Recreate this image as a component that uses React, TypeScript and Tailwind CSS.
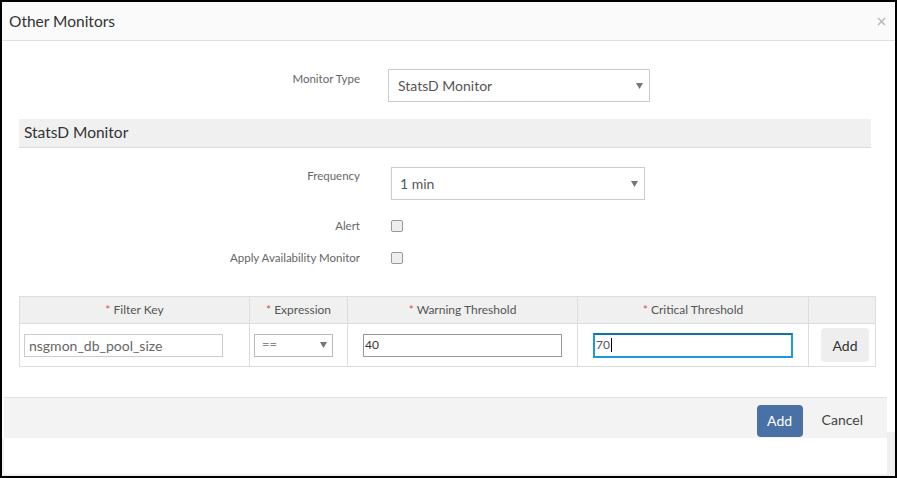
import React from "react";

const font = { fontFamily: "Lato, 'Noto Sans', sans-serif" };

function Caret() {
  return (
    <svg width="7" height="6" viewBox="0 0 7 6" className="shrink-0">
      <path d="M0 0 H7 L3.5 6 Z" fill="#777" />
    </svg>
  );
}

function Req({ children }: { children: React.ReactNode }) {
  return (
    <span>
      <span className="text-[#d9534f]">*</span> {children}
    </span>
  );
}

export default function App() {
  return (
    <div
      className="w-[897px] h-[478px] border-2 border-black bg-[#f0f0f0] flex flex-col overflow-hidden"
      style={font}
    >
      {/* modal */}
      <div className="bg-white h-[395px] flex flex-col shrink-0">
        <div className="h-[39px] bg-[#fafafa] border-b border-[#e0e0e0] flex items-center justify-between pl-[7px] pr-[9px] shrink-0">
          <span className="text-[15.5px] text-[#333] leading-none mt-[2px]">Other Monitors</span>
          <svg width="9" height="9" viewBox="0 0 9 9" className="mt-[1px]">
            <path d="M1 1 L8 8 M8 1 L1 8" stroke="#bbb" strokeWidth="1.6" />
          </svg>
        </div>
        <div className="flex flex-col">
          {/* Monitor Type */}
          <div className="flex mt-[28px]">
            <div className="w-[358px] text-right text-[11.5px] text-[#666] pt-[2px] leading-4">Monitor Type</div>
            <div className="ml-[28px] w-[262px] h-[33px] border border-[#ccc] flex items-center justify-between pl-[9px] pr-[6px]">
              <span className="text-[14px] text-[#555]">StatsD Monitor</span>
              <Caret />
            </div>
          </div>
          {/* Section */}
          <div className="mt-[17px] ml-[17px] w-[852px] h-[29px] bg-[#f0f0f0] border-b border-[#ddd] flex items-center pl-[5px]">
            <span className="text-[15.5px] text-[#333]">StatsD Monitor</span>
          </div>
          {/* Frequency */}
          <div className="flex mt-[19px]">
            <div className="w-[358px] text-right text-[11.5px] text-[#666] pt-[1px] leading-4">Frequency</div>
            <div className="ml-[31px] w-[254px] h-[33px] border border-[#ccc] flex items-center justify-between pl-[8px] pr-[6px]">
              <span className="text-[14px] text-[#555]">1 min</span>
              <Caret />
            </div>
          </div>
          {/* Alert */}
          <div className="flex items-center mt-[20px] h-[12px]">
            <div className="w-[358px] text-right text-[11.5px] text-[#666] leading-4">Alert</div>
            <div className="ml-[31px] w-[12px] h-[12px] rounded-[2px] border border-[#999] bg-[#eee]" />
          </div>
          <div className="flex items-center mt-[20px] h-[12px]">
            <div className="w-[358px] text-right text-[11.5px] text-[#666] leading-4">Apply Availability Monitor</div>
            <div className="ml-[31px] w-[12px] h-[12px] rounded-[2px] border border-[#999] bg-[#eee]" />
          </div>
          {/* Table */}
          <div className="mt-[32px] ml-[17px] w-[857px] border border-[#ddd]">
            <div className="grid grid-cols-[230px_98px_230px_231px_66px] h-[27px] bg-[#f0f0f0] border-b border-[#ddd] text-[12px] text-[#555]">
              <div className="flex items-center justify-center border-r border-[#ddd]"><Req>Filter Key</Req></div>
              <div className="flex items-center justify-center border-r border-[#ddd]"><Req>Expression</Req></div>
              <div className="flex items-center justify-center border-r border-[#ddd]"><Req>Warning Threshold</Req></div>
              <div className="flex items-center justify-center border-r border-[#ddd]"><Req>Critical Threshold</Req></div>
              <div />
            </div>
            <div className="grid grid-cols-[230px_98px_230px_231px_66px] h-[42px]">
              <div className="flex items-center border-r border-[#ddd] pl-[4px]">
                <div className="w-[199px] h-[23px] border border-[#ccc] flex items-center pl-[4px] text-[14px] text-[#666]">nsgmon_db_pool_size</div>
              </div>
              <div className="flex items-center border-r border-[#ddd] pl-[4px]">
                <div className="w-[79px] h-[23px] border border-[#bbb] flex items-center justify-between pl-[7px] pr-[5px] text-[13px] text-[#888]">
                  <span>==</span>
                  <Caret />
                </div>
              </div>
              <div className="flex items-center border-r border-[#ddd] pl-[15px]">
                <div className="w-[199px] h-[23px] border border-[#999] flex items-center pl-[1px] text-[12px] text-[#333]">40</div>
              </div>
              <div className="flex items-center border-r border-[#ddd] pl-[15px]">
                <div className="w-[200px] h-[25px] border-2 border-[#1a9ae0] border-t-[#1670a8] flex items-center pl-[1px] text-[12px] text-[#555]">
                  70<span className="inline-block w-px h-[14px] bg-black ml-px" />
                </div>
              </div>
              <div className="flex items-center pl-[12px]">
                <div className="w-[48px] h-[34px] rounded-[4px] bg-[#eee] flex items-center justify-center text-[14px] text-[#333]">Add</div>
              </div>
            </div>
          </div>
        </div>
      </div>
      {/* footer */}
      <div className="flex h-[41px] shrink-0 bg-white">
        <div className="ml-[2px] w-[883px] h-[41px] bg-[#f3f3f3] border-t border-[#e0e0e0] flex items-center justify-end pr-[24px]">
          <div className="w-[46px] h-[32px] rounded-[4px] bg-[#4a71a5] text-white text-[14px] flex items-center justify-center mt-[5px]">Add</div>
          <span className="ml-[19px] text-[14px] text-[#444] mt-[3px]">Cancel</span>
        </div>
        <div className="flex-1 flex flex-col">
          <div className="h-[35px] bg-white" />
          <div className="flex-1 bg-[#f0f0f0]" />
        </div>
      </div>
      <div className="ml-[2px] w-[883px] h-[36px] bg-white shrink-0" />
    </div>
  );
}
